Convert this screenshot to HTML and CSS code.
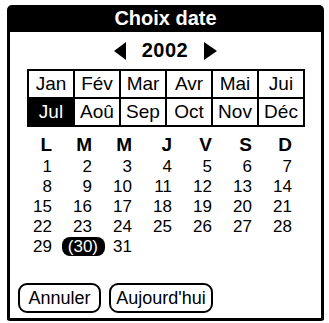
FILE: index.html
```html
<!DOCTYPE html>
<html>
<head>
<meta charset="utf-8">
<link rel="stylesheet" href="styles.css">
</head>
<body>
<div class="dialog">
  <div class="title">Choix date</div>
  <div class="year">
    <span class="tri tri-left"></span>
    <span class="yr">2002</span>
    <span class="tri tri-right"></span>
  </div>
  <div class="months">
    <div class="m">Jan</div><div class="m">Fév</div><div class="m">Mar</div><div class="m">Avr</div><div class="m">Mai</div><div class="m">Jui</div>
    <div class="m on">Jul</div><div class="m">Aoû</div><div class="m">Sep</div><div class="m">Oct</div><div class="m">Nov</div><div class="m">Déc</div>
  </div>
  <div class="days">
    <div class="hd">L</div><div class="hd">M</div><div class="hd">M</div><div class="hd">J</div><div class="hd">V</div><div class="hd">S</div><div class="hd">D</div>
    <div class="d">1</div><div class="d">2</div><div class="d">3</div><div class="d">4</div><div class="d">5</div><div class="d">6</div><div class="d">7</div>
    <div class="d">8</div><div class="d">9</div><div class="d">10</div><div class="d">11</div><div class="d">12</div><div class="d">13</div><div class="d">14</div>
    <div class="d">15</div><div class="d">16</div><div class="d">17</div><div class="d">18</div><div class="d">19</div><div class="d">20</div><div class="d">21</div>
    <div class="d">22</div><div class="d">23</div><div class="d">24</div><div class="d">25</div><div class="d">26</div><div class="d">27</div><div class="d">28</div>
    <div class="d">29</div><div class="d"><span class="sel">(30)</span></div><div class="d">31</div>
  </div>
  <div class="buttons">
    <div class="btn btn-cancel">Annuler</div>
    <div class="btn btn-today">Aujourd'hui</div>
  </div>
</div>
</body>
</html>
```
FILE: styles.css
```css
html, body {
  margin: 0;
  padding: 0;
  background: #fff;
}
body {
  font-family: "Liberation Sans", Arial, sans-serif;
  color: #000;
}
.dialog {
  margin: 5px 0 0 7px;
  width: 317px;
  height: 316px;
  box-sizing: border-box;
  border: 3px solid #000;
  border-top: 0;
  border-radius: 7px 7px 3px 3px;
  display: flex;
  flex-direction: column;
  background: #fff;
}
.title {
  height: 27px;
  line-height: 27px;
  background: #000;
  color: #fff;
  font-weight: bold;
  font-size: 20px;
  text-align: center;
  border-radius: 5px 5px 0 0;
  margin: 0 -3px;
}
.year {
  margin-top: 9px;
  height: 19px;
  display: flex;
  align-items: center;
  justify-content: center;
}
.yr {
  font-weight: bold;
  font-size: 20px;
  line-height: 19px;
  letter-spacing: 0.5px;
  margin: 0 16px 0 16px;
}
.tri {
  width: 0;
  height: 0;
  border-top: 9px solid transparent;
  border-bottom: 9px solid transparent;
}
.tri-left {
  border-right: 12px solid #000;
}
.tri-right {
  border-left: 13px solid #000;
}
.months {
  margin: 9px 0 0 17px;
  width: 278px;
  height: 58px;
  box-sizing: border-box;
  padding: 2px;
  background: #000;
  display: grid;
  grid-template-columns: repeat(6, 1fr);
  grid-template-rows: 26px 26px;
  gap: 2px;
}
.m {
  background: #fff;
  font-size: 19px;
  line-height: 26px;
  text-align: center;
}
.m.on {
  background: #000;
  color: #fff;
}
.days {
  margin: 7px 0 0 2px;
  display: grid;
  grid-template-columns: repeat(7, 40px);
  grid-template-rows: 22px repeat(5, 20px);
}
.hd {
  font-weight: bold;
  font-size: 19px;
  line-height: 22px;
  text-align: right;
}
.d {
  font-size: 17px;
  line-height: 21px;
  text-align: right;
}
.sel {
  display: inline-block;
  background: #000;
  color: #fff;
  border-radius: 8px;
  padding: 0 7px 0 6px;
  line-height: 19px;
  margin-right: -13px;
}
.buttons {
  margin: 27px 0 0 8px;
  display: flex;
  gap: 8px;
}
.btn {
  height: 30px;
  box-sizing: border-box;
  border: 2px solid #000;
  border-radius: 9px;
  font-size: 18px;
  line-height: 26px;
  text-align: center;
}
.btn-cancel {
  width: 83px;
}
.btn-today {
  width: 104px;
}
```
